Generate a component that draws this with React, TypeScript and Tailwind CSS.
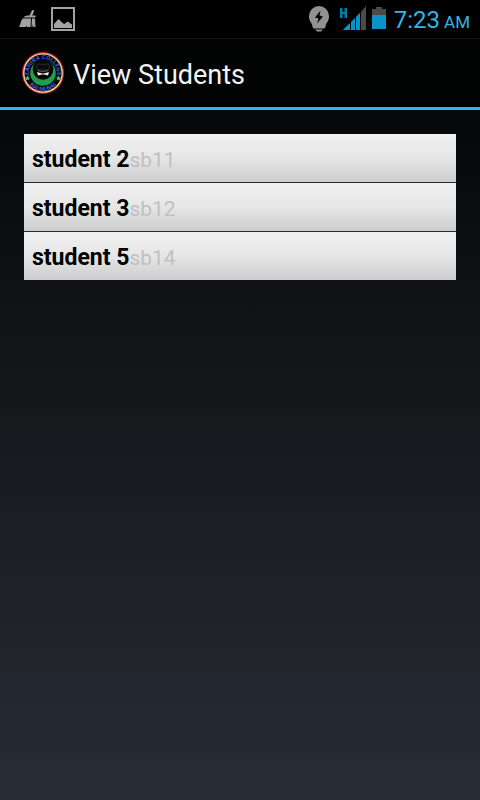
const students = [
  { name: "student 2", index: "sb11" },
  { name: "student 3", index: "sb12" },
  { name: "student 5", index: "sb14" },
];

function CleanerIcon() {
  return (
    <svg width="18" height="20" viewBox="0 0 18 20" fill="#a3a3a3">
      <path d="M13 1.500c1-1 2.600 0 2 1.200L13.200 6.500H16.500V8.500H4.500C5.500 6.800 7.500 6.500 10.500 6.500z" />
      <path d="M4 9.500h8L11.500 18H8l-.5-1.500L7 18H0C2 15 1.500 11 4 9.500zM13 9.500h3L16.500 18H14.500l-.6-3-.4 3h-1z" />
    </svg>
  );
}

function PictureIcon() {
  return (
    <svg width="24" height="24" viewBox="0 0 24 24">
      <rect x="1" y="1" width="22" height="22" fill="none" stroke="#a3a3a3" strokeWidth="2" />
      <path d="M3 21v-4l4.500-5 4 4 2 1 3-2.500 4.500 3V21z" fill="#a3a3a3" />
    </svg>
  );
}

function PowerIcon() {
  return (
    <svg width="20" height="26" viewBox="0 0 20 26">
      <path
        d="M10 0a10 10 0 0 1 10 10c0 5-2 6-3 8.500-.5 1.500-.5 4-2 4H5c-1.500 0-1.500-2.500-2-4C2 16 0 15 0 10A10 10 0 0 1 10 0z"
        fill="#919191"
      />
      <path d="M6 23.500h8l-2 2H8z" fill="#919191" />
      <path d="M11.500 4.500 6 11.500l3.500 1L8 17.500l6-7-3.500-1z" fill="#000" />
    </svg>
  );
}

function SignalIcon() {
  return (
    <svg width="26" height="24" viewBox="0 0 26 24" fill="#0a93c4">
      <path d="M0 2h2.500v4h2V2H7v10H4.500V8h-2v4H0z" fill="#087ca5" />
      <path d="M3 24l7-6.500V24zM11 16.500l4-4V24h-4zM16 11.500l4-4.500V24h-4z" />
      <path d="M21 6l5-6v24h-5z" fill="#4a4a4a" />
      <path d="M3 24 20 7V24z" />
      <path d="M10 15h1v9h-1zM15 10h1v14h-1zM20 5h1v19h-1z" fill="#000" />
    </svg>
  );
}

function BatteryIcon() {
  return (
    <svg width="14" height="22" viewBox="0 0 14 22">
      <path d="M4 0h6v2h4v20H0V2h4z" fill="#4a4a4a" />
      <path d="M0 8h14v14H0z" fill="#0a93c4" />
    </svg>
  );
}

function Logo() {
  return (
    <svg width="42" height="42" viewBox="0 0 42 42" role="img" aria-label="Zahira College Kalmunai">
      <circle cx="21" cy="21" r="20" fill="#02050a" stroke="#c5282b" strokeWidth="2" />
      <circle cx="21" cy="21" r="19.200" fill="none" stroke="#f2df8c" strokeWidth="1.300" />
      <circle cx="21" cy="21" r="12.800" fill="#229c4e" />
      <circle cx="21" cy="17.500" r="10.300" fill="#030806" />
      <path d="M14 14q1-3 4-2 3 1 6 0 3-1 4 2l-2 4H16z" fill="#0c0c0c" stroke="#3a3a3a" strokeWidth=".7" />
      <path d="M15 20l5 1.500h2l5-1.500-1 3.500-4-1h-2l-4 1z" fill="#eee" />
      <path d="M15.500 18.500q5.500 2 11 0" fill="none" stroke="#777" strokeWidth=".8" />
      <path d="M5.500 23.500l.8 1.700 1.800.2-1.300 1.200.4 1.900-1.700-1-1.700 1 .4-1.900-1.300-1.200 1.800-.2zM36.500 23.500l.8 1.700 1.800.2-1.300 1.200.4 1.900-1.700-1-1.700 1 .4-1.900-1.300-1.200 1.800-.2z" fill="#55bd7b" />
      <path id="logo-top" d="M6.900 23A14.200 14.200 0 1 1 35.100 23" fill="none" />
      <path id="logo-bottom" d="M4 27A18 18 0 0 0 38 27" fill="none" />
      <g className="font-[Roboto,sans-serif] font-bold" fill="#3f5fd0" fontSize="6" textAnchor="middle">
        <text>
          <textPath href="#logo-top" startOffset="50%">ZAHIRA COLLEGE</textPath>
        </text>
        <text>
          <textPath href="#logo-bottom" startOffset="50%">KALMUNAI</textPath>
        </text>
      </g>
    </svg>
  );
}

export default function App() {
  return (
    <div className="flex min-h-screen flex-col bg-linear-to-b/srgb from-black via-[#15181b] to-[#282c35] font-[Roboto,sans-serif]">
      <div className="flex h-[38px] items-center justify-between bg-black pr-[10px] pl-[19px]">
        <div className="flex items-center gap-[14px]">
          <CleanerIcon />
          <PictureIcon />
        </div>
        <div className="flex items-center">
          <PowerIcon />
          <div className="ml-[11px] flex items-center gap-[6px] pb-[2px]">
            <SignalIcon />
            <BatteryIcon />
          </div>
          <div className="ml-2 flex items-baseline gap-1 pt-[2px] text-[#33b5e5]">
            <span className="text-2xl leading-8">7:23</span>
            <span className="text-[17px]">AM</span>
          </div>
        </div>
      </div>

      <header className="flex h-[72px] items-center gap-[9px] border-t border-b-3 border-t-[#141414] border-b-[#33b5e5] bg-[#020303] px-[22px]">
        <Logo />
        <h1 className="pt-[5px] text-[27px] text-[#f3f3f3]">View Students</h1>
      </header>

      <main className="p-6">
        <ul className="divide-y divide-[#2b2b2b]">
          {students.map((student) => (
            <li
              key={student.index}
              className="flex h-[49px] items-baseline bg-linear-to-b/srgb from-[#f0f0f0] via-[#e6e6e6] to-[#cdcdcd] px-2 pt-[10px] leading-8 last:h-12"
            >
              <span className="text-[23px] font-bold text-black">{student.name}</span>
              <span className="text-[21px] text-[#c0c0c0]">{student.index}</span>
            </li>
          ))}
        </ul>
      </main>
    </div>
  );
}
